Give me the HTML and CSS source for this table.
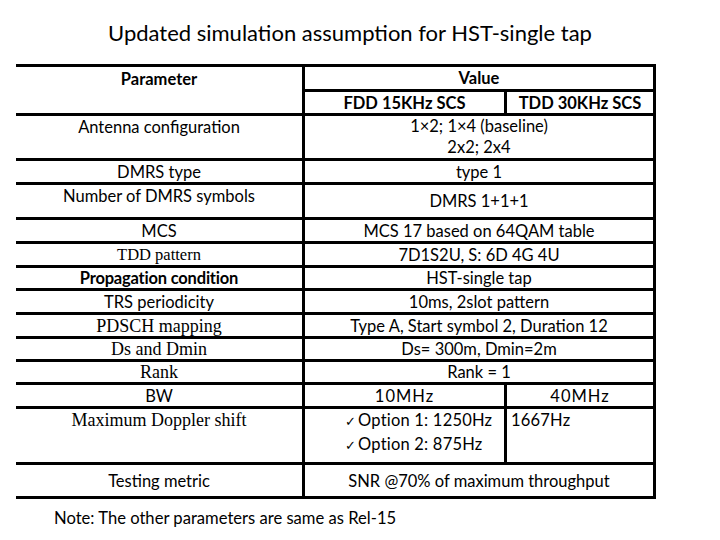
FILE: index.html
```html
<!DOCTYPE html>
<html>
<head>
<meta charset="utf-8">
<link rel="stylesheet" href="styles.css">
</head>
<body>
<div class="slide">
  <h1 class="title">Updated simulation assumption for HST-single tap</h1>
  <div class="grid">
    <div class="cell top bold r-span2">Parameter</div>
    <div class="cell mid bold c-span2">Value</div>
    <div class="cell mid bold">FDD 15KHz SCS</div>
    <div class="cell mid bold">TDD 30KHz SCS</div>

    <div class="cell top">Antenna configuration</div>
    <div class="cell top c-span2 stack ant"><span>1×2; 1×4 (baseline)</span><span>2x2; 2x4</span></div>

    <div class="cell mid">DMRS type</div>
    <div class="cell mid c-span2">type 1</div>

    <div class="cell top">Number of DMRS symbols</div>
    <div class="cell mid c-span2">DMRS 1+1+1</div>

    <div class="cell mid">MCS</div>
    <div class="cell mid c-span2">MCS 17 based on 64QAM table</div>

    <div class="cell mid serif small">TDD pattern</div>
    <div class="cell mid c-span2">7D1S2U, S: 6D 4G 4U</div>

    <div class="cell mid semi">Propagation condition</div>
    <div class="cell mid c-span2">HST-single tap</div>

    <div class="cell mid">TRS periodicity</div>
    <div class="cell mid c-span2">10ms, 2slot pattern</div>

    <div class="cell mid serif">PDSCH mapping</div>
    <div class="cell mid c-span2">Type A, Start symbol 2, Duration 12</div>

    <div class="cell mid serif">Ds and Dmin</div>
    <div class="cell mid c-span2">Ds= 300m, Dmin=2m</div>

    <div class="cell mid serif">Rank</div>
    <div class="cell mid c-span2">Rank = 1</div>

    <div class="cell mid">BW</div>
    <div class="cell mid spaced">10MHz</div>
    <div class="cell mid spaced">40MHz</div>

    <div class="cell top serif">Maximum Doppler shift</div>
    <div class="cell top stack left opts"><span><i class="chk">✓</i>Option 1: 1250Hz</span><span><i class="chk">✓</i>Option 2: 875Hz</span></div>
    <div class="cell top left f1667">1667Hz</div>

    <div class="cell mid">Testing metric</div>
    <div class="cell mid c-span2">SNR @70% of maximum throughput</div>
  </div>
  <p class="note">Note: The other parameters are same as Rel-15</p>
</div>
</body>
</html>
```

FILE: styles.css
```css
html, body {
  margin: 0;
  padding: 0;
  background: #ffffff;
}

body {
  font-family: "Lato", "Liberation Sans", sans-serif;
  color: #000000;
  width: 720px;
  height: 540px;
  overflow: hidden;
}

.slide {
  display: flex;
  flex-direction: column;
  padding-top: 19px;
}

.title {
  margin: 0 0 0 -20px;
  height: 45px;
  width: 740px;
  font-weight: 400;
  font-size: 22px;
  line-height: 28px;
  text-align: center;
}

.grid {
  margin-left: 16px;
  width: 640px;
  box-sizing: border-box;
  display: grid;
  grid-template-columns: 286px 199px 146px;
  grid-template-rows: 22px 21px 42px 21px 32px 21px 21px 20px 21px 21px 20px 20px 21px 53px 31px;
  gap: 3px;
  padding: 3px 3px 3px 0;
  background: #000000;
}

.cell {
  background: #ffffff;
  display: flex;
  justify-content: center;
  font-size: 16.5px;
  line-height: 22px;
  white-space: nowrap;
}

.top { align-items: flex-start; }
.mid { align-items: center; }

.r-span2 { grid-row: span 2; padding-top: 1px; }
.c-span2 { grid-column: span 2; }

.bold { font-weight: 700; }
.semi { font-weight: 700; letter-spacing: -0.2px; }

.serif {
  font-family: "Liberation Serif", "DejaVu Serif", serif;
  font-size: 18px;
}
.serif.small { font-size: 16.5px; }

.stack {
  flex-direction: column;
  align-items: center;
  justify-content: flex-start;
  line-height: 22px;
}

.ant {
  line-height: 21px;
}

.left {
  justify-content: flex-start;
}

.stack.left {
  align-items: flex-start;
  padding-left: 40px;
  line-height: 22px;
}

.opts { letter-spacing: 0.2px; }

.chk {
  font-style: normal;
  font-family: "DejaVu Sans", sans-serif;
  font-size: 13px;
  margin-right: 2px;
}

.f1667 {
  padding-left: 4px;
  letter-spacing: 0.2px;
}

.spaced { letter-spacing: 1px; }

.note {
  margin: 8px 0 0 54px;
  font-size: 16.6px;
  line-height: 22px;
}
```
